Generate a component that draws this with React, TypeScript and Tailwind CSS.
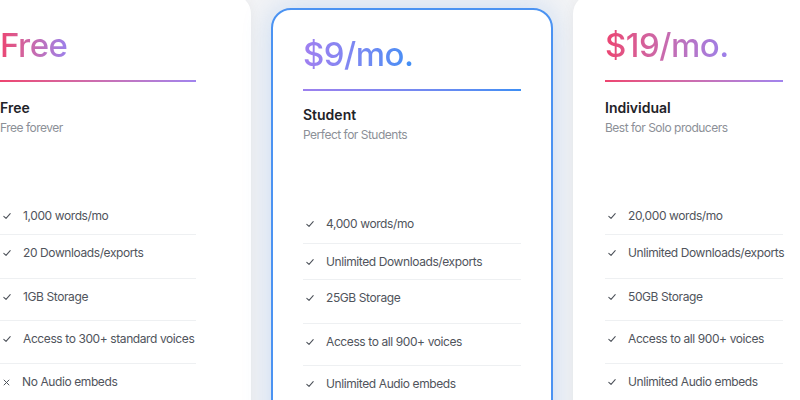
import React from 'react';

type Feature = { text: string; ok: boolean; h: number };

type Plan = {
  price: string;
  name: string;
  blurb: string;
  features: Feature[];
};

const free: Plan = {
  price: 'Free',
  name: 'Free',
  blurb: 'Free forever',
  features: [
    { text: '1,000 words/mo', ok: true, h: 37 },
    { text: '20 Downloads/exports', ok: true, h: 44 },
    { text: '1GB Storage', ok: true, h: 42 },
    { text: 'Access to 300+ standard voices', ok: true, h: 43 },
    { text: 'No Audio embeds', ok: false, h: 44 },
  ],
};

const student: Plan = {
  price: '$9/mo.',
  name: 'Student',
  blurb: 'Perfect for Students',
  features: [
    { text: '4,000 words/mo', ok: true, h: 38 },
    { text: 'Unlimited Downloads/exports', ok: true, h: 36 },
    { text: '25GB Storage', ok: true, h: 44 },
    { text: 'Access to all 900+ voices', ok: true, h: 42 },
    { text: 'Unlimited Audio embeds', ok: true, h: 44 },
  ],
};

const individual: Plan = {
  price: '$19/mo.',
  name: 'Individual',
  blurb: 'Best for Solo producers',
  features: [
    { text: '20,000 words/mo', ok: true, h: 37 },
    { text: 'Unlimited Downloads/exports', ok: true, h: 44 },
    { text: '50GB Storage', ok: true, h: 42 },
    { text: 'Access to all 900+ voices', ok: true, h: 43 },
    { text: 'Unlimited Audio embeds', ok: true, h: 44 },
  ],
};

function Check() {
  return (
    <svg viewBox="0 0 10 10" className="ml-[3px] h-[8px] w-[8px] shrink-0" fill="none">
      <path d="M1 5.4 L3.8 8 L9 2" stroke="#4b5058" strokeWidth="1.3" strokeLinecap="round" strokeLinejoin="round" />
    </svg>
  );
}

function Cross() {
  return (
    <svg viewBox="0 0 10 10" className="ml-[3px] h-[7px] w-[7px] shrink-0" fill="none">
      <path d="M1.5 1.5 L8.5 8.5 M8.5 1.5 L1.5 8.5" stroke="#4b5058" strokeWidth="1.4" strokeLinecap="round" />
    </svg>
  );
}

function FeatureList({ features }: { features: Feature[] }) {
  return (
    <div className="flex flex-col">
      {features.map((f, i) => (
        <div
          key={f.text}
          className={
            i < features.length - 1
              ? 'border-b border-[#eef0f2] pt-[10px]'
              : 'pt-[10px]'
          }
          style={{ height: f.h }}
        >
          <div className="flex items-center">
            {f.ok ? <Check /> : <Cross />}
            <span className="ml-[12px] whitespace-nowrap text-[12px] leading-4 tracking-[-0.4px] text-[#50545c]">
              {f.text}
            </span>
          </div>
        </div>
      ))}
    </div>
  );
}

export default function App() {
  return (
    <div
      className="h-[400px] w-[800px] overflow-hidden bg-[#f2f3f5]"
      style={{ fontFamily: 'Inter, "Noto Sans", sans-serif' }}
    >
      <div className="flex items-start gap-5">
        {/* Free */}
        <div className="-ml-[32px] -mt-[6px] h-[440px] w-[283px] shrink-0 rounded-[20px] bg-white pl-[32px] pt-[31px] shadow-[0_2px_14px_rgba(15,23,42,0.05)]">
          <div className="w-[196px]">
            <div className="w-fit bg-gradient-to-r from-[#ec4371] to-[#9a80ec] bg-clip-text text-[33px] font-medium leading-[40px] tracking-[-0.5px] text-transparent">
              {free.price}
            </div>
            <div className="mt-[15px] h-[1.5px] bg-gradient-to-r from-[#ee4470] to-[#a184ee]" />
            <div className="mt-[16.5px] text-[14px] font-semibold leading-5 text-[#1f2328]">
              {free.name}
            </div>
            <div className="mt-[2px] text-[12px] leading-4 tracking-[-0.5px] text-[#8c9097]">
              {free.blurb}
            </div>
            <div className="mt-[62px]">
              <FeatureList features={free.features} />
            </div>
          </div>
        </div>

        {/* Student */}
        <div className="mt-2 h-[440px] w-[282px] shrink-0 rounded-[20px] border-2 border-[#4b93f2] bg-white px-[30px] pt-6 shadow-[0_0_28px_rgba(80,150,240,0.26)]">
          <div className="w-fit bg-gradient-to-r from-[#a07ff0] to-[#3c8ff5] bg-clip-text text-[33px] font-medium leading-[40px] tracking-[-0.5px] text-transparent">
            {student.price}
          </div>
          <div className="mt-[15px] h-[1.5px] bg-gradient-to-r from-[#9c80ee] to-[#3d8ff4]" />
          <div className="mt-[14.5px] text-[14px] font-semibold leading-5 text-[#1f2328]">
            {student.name}
          </div>
          <div className="mt-[1.5px] text-[12px] leading-4 tracking-[-0.5px] text-[#8c9097]">
            {student.blurb}
          </div>
          <div className="mt-[63.5px]">
            <FeatureList features={student.features} />
          </div>
        </div>

        {/* Individual */}
        <div className="-mt-[6px] h-[440px] w-[283px] shrink-0 rounded-[20px] bg-white pl-[32px] pt-[31px] shadow-[0_2px_14px_rgba(15,23,42,0.05)]">
          <div className="w-[178px]">
            <div className="w-fit bg-gradient-to-r from-[#ec4371] to-[#9a80ec] bg-clip-text text-[33px] font-medium leading-[40px] tracking-[-0.5px] text-transparent">
              {individual.price}
            </div>
            <div className="mt-[15px] h-[1.5px] bg-gradient-to-r from-[#ee4470] to-[#a184ee]" />
            <div className="mt-[16.5px] text-[14px] font-semibold leading-5 text-[#1f2328]">
              {individual.name}
            </div>
            <div className="mt-[2px] text-[12px] leading-4 tracking-[-0.5px] text-[#8c9097]">
              {individual.blurb}
            </div>
            <div className="mt-[62px]">
              <FeatureList features={individual.features} />
            </div>
          </div>
        </div>
      </div>
    </div>
  );
}
